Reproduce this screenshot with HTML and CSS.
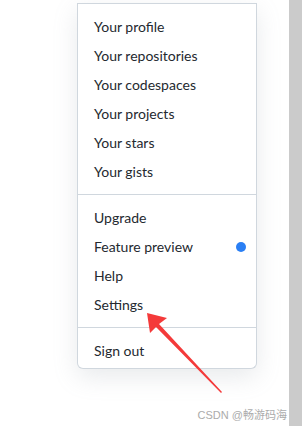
FILE: index.html
```html
<!DOCTYPE html>
<html lang="en">
<head>
  <meta charset="UTF-8">
  <meta name="viewport" content="width=device-width, initial-scale=1.0">
  <title>Menu</title>
  <link rel="stylesheet" href="styles.css">
</head>
<body>
  <div class="page">
    <div class="main">
      <div class="menu">
        <div class="divider first"></div>
        <a class="item" href="#">Your profile</a>
        <a class="item" href="#">Your repositories</a>
        <a class="item" href="#">Your codespaces</a>
        <a class="item" href="#">Your projects</a>
        <a class="item" href="#">Your stars</a>
        <a class="item" href="#">Your gists</a>
        <div class="divider"></div>
        <a class="item" href="#">Upgrade</a>
        <a class="item" href="#">Feature preview <span class="dot"></span></a>
        <a class="item" href="#">Help</a>
        <a class="item" href="#">Settings</a>
        <div class="divider"></div>
        <a class="item" href="#">Sign out</a>
      </div>
      <div class="mark">CSDN @畅游码海</div>
      <svg class="arrow" width="302" height="426" viewBox="0 0 302 426">
        <polygon points="147,313 150,333 156,327 221,393 222,392 159,324 167,318" fill="#f43a3a"/>
      </svg>
    </div>
    <div class="scrollbar"></div>
  </div>
</body>
</html>
```

FILE: styles.css
```css
*{margin:0; padding:0; box-sizing:border-box;}
body{background:#fff; font-family:Lato, "Noto Sans", sans-serif; color:#24292f;}
.page{display:flex; height:426px; overflow:hidden;}
.main{flex:1; position:relative;}
.scrollbar{width:13px; background:#cbcbcb;}

.menu{width:180px; margin-left:77px; background:#fff; border:1px solid #d0d7de; border-top:0; border-radius:0 0 6px 6px; padding-bottom:3px; box-shadow:0 8px 24px rgba(140,149,159,0.2);}
.divider{height:1px; background:#d0d7de; margin:8px 0;}
.divider.first{margin-top:3px;}
.item{display:flex; align-items:center; justify-content:space-between; height:29px; padding:0 10px 0 16px; font-size:14px; color:#24292f; text-decoration:none;}
.dot{width:10px; height:10px; border-radius:50%; background:#2a7ff4;}

.mark{text-align:right; padding-right:2px; margin-top:37px; font-size:11px; color:#ababab; font-family:"Liberation Sans", "Noto Sans CJK SC", sans-serif;}
.arrow{position:absolute; left:0; top:0; pointer-events:none;}
```
